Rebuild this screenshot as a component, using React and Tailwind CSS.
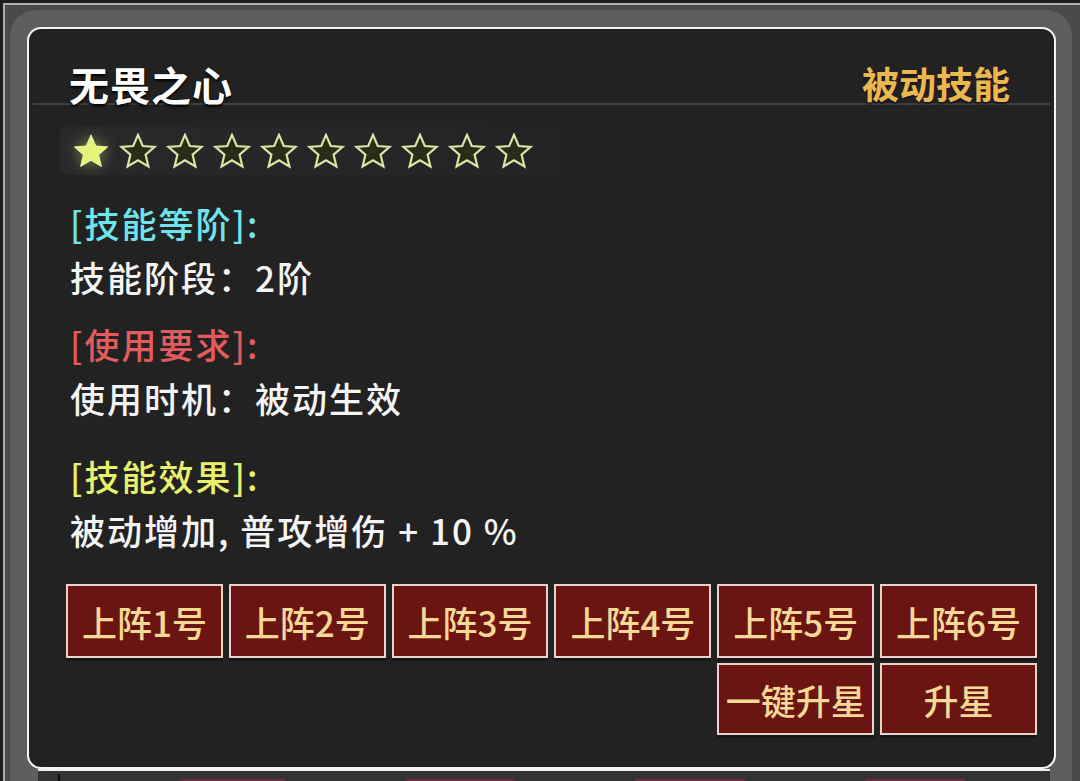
import React from 'react';

const STAR = "M12 1.2l3.05 7.1 7.6.6-5.8 5 1.8 7.5L12 17.4l-6.65 4 1.8-7.5-5.8-5 7.6-.6z";

function Star({ filled }) {
  if (filled) {
    return (
      <svg width="38" height="36" viewBox="0 0 24 23" className="shrink-0 [filter:drop-shadow(0_0_7px_rgba(220,240,110,0.5))]">
        <path d={STAR} fill="#e6f47c" stroke="#f2f9b0" strokeWidth="0.6" strokeLinejoin="round" />
      </svg>
    );
  }
  return (
    <svg width="38" height="36" viewBox="0 0 24 23" className="shrink-0">
      <path d={STAR} fill="#2a2c17" stroke="#dce3a4" strokeWidth="1.4" strokeLinejoin="miter" />
    </svg>
  );
}

function Btn({ children }) {
  return (
    <div className="h-full bg-[#6a1511] border-2 border-[#e9d3cb] flex items-center justify-center text-[35px] font-medium leading-none text-[#f6d996] shadow-[0_3px_0_#161616]">
      {children}
    </div>
  );
}

const stars = [1, 0, 0, 0, 0, 0, 0, 0, 0, 0];

export default function App() {
  return (
    <div className="w-[1080px] h-[781px] overflow-hidden bg-[#1e1e1e] pt-[3px] pl-[3px] font-['Noto_Sans_CJK_SC','Noto_Sans',sans-serif]">
      <div className="h-[820px] border-t-2 border-l-2 border-[#adadad] bg-[#4a4a4a] pt-[5px] pl-[5px] pr-[8px]">
        <div className="rounded-[26px] bg-[#5e5e5e] pt-[17px] pl-[17px] pr-[16px] h-[800px]">
          <div className="h-[742px] rounded-[14px] border-2 border-[#f4f4f4] bg-[#222222] pt-[35px]">
            {/* header */}
            <div className="h-[39px] flex items-center justify-between pl-[40px] pr-[44px]">
              <div className="text-[40px] font-semibold leading-none tracking-[1px] text-white [text-shadow:0_2px_3px_#000]">无畏之心</div>
              <div className="text-[37px] font-semibold leading-none text-[#eab84c] [text-shadow:0_2px_2px_#1a1228]">被动技能</div>
            </div>
            <div className="mx-[4px] h-[2px] bg-[#3e3e3e]" />

            {/* stars */}
            <div className="mt-[22px] ml-[31px] w-[500px] h-[48px] flex items-center gap-[9px] pl-[12px] bg-gradient-to-r from-[#29292b] via-[#262629] to-[#242426] rounded-[8px]">
              {stars.map((s, i) => (
                <Star key={i} filled={s === 1} />
              ))}
            </div>

            {/* info */}
            <div className="pl-[41px] text-[35px] font-medium leading-[54px] tracking-[2px]">
              <div className="mt-[21px] text-[#70e3ec]">[技能等阶]:</div>
              <div className="text-[#f4f4f4]">技能阶段：2阶</div>
              <div className="mt-[13px] text-[#e35b5d]">[使用要求]:</div>
              <div className="text-[#f4f4f4]">使用时机：被动生效</div>
              <div className="mt-[24px] text-[#e8f06c]">[技能效果]:</div>
              <div className="text-[#f4f4f4]">被动增加, 普攻增伤 + 10 %</div>
            </div>

            {/* buttons */}
            <div className="mt-[27px] ml-[37px] w-[971px] grid grid-cols-6 gap-x-[6px] gap-y-[5px] grid-rows-[74px_72px]">
              <Btn>上阵1号</Btn>
              <Btn>上阵2号</Btn>
              <Btn>上阵3号</Btn>
              <Btn>上阵4号</Btn>
              <Btn>上阵5号</Btn>
              <Btn>上阵6号</Btn>
              <div className="col-start-5 h-full">
                <Btn>一键升星</Btn>
              </div>
              <Btn>升星</Btn>
            </div>
          </div>
          <div className="ml-[11px] mr-[6px] h-[20px] bg-[#333333] border-t-2 border-[#f0f0f0] flex items-start gap-[120px] pl-[20px] pt-[3px]">
            <div className="w-[2px] h-[14px] bg-[#0a0a0a]" />
            <div className="w-[105px] h-[6px] mt-[5px] rounded-[2px] bg-[#6e2a44]" />
            <div className="w-[110px] h-[6px] mt-[5px] rounded-[2px] bg-[#6e2a44]" />
            <div className="w-[110px] h-[6px] mt-[5px] rounded-[2px] bg-[#6e2a44]" />
            <div className="w-[100px] h-[6px] mt-[5px] rounded-[2px] bg-[#6e2a44]" />
          </div>
        </div>
      </div>
    </div>
  );
}
